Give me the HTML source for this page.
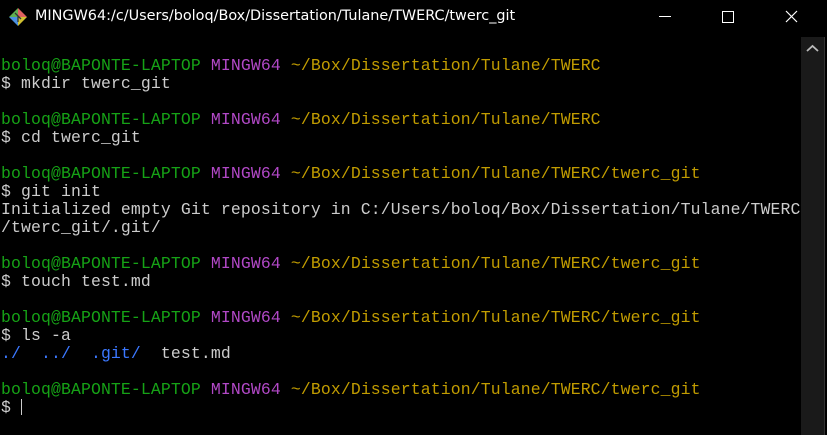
<!DOCTYPE html>
<html><head><style>
body{margin:0;width:827px;height:435px;background:#000;overflow:hidden;position:relative;font-family:"Liberation Sans",sans-serif}
.title{position:absolute;left:35px;top:8px;color:#fff;font-size:14.4px;font-family:"DejaVu Sans","Liberation Sans",sans-serif}
.term{position:absolute;left:1px;top:57px;font-family:"Liberation Mono",monospace;font-size:16.45px;letter-spacing:0.13px;line-height:18px;color:#cccccc;white-space:pre}
.g{color:#16a216}.m{color:#b148c6}.y{color:#c19c00}.b{color:#3b78ff}
.sb{position:absolute;left:801px;top:37px;width:23px;height:398px;background:#1a1a1a;border-right:1px solid #333}
</style></head><body>
<svg style="position:absolute;left:8px;top:7px" width="20" height="20" viewBox="0 0 20 20">
<polygon points="10,1 19,10 10,10" fill="#e06060"/>
<polygon points="1,10 10,10 10,19" fill="#4a90e0"/>
<polygon points="10,10 19,10 10,19" fill="#d0c030"/>
<polygon points="10,1 1,10 10,10" fill="#60b050"/>
<path d="M7 6 L13 12 M10 9 L10 15" stroke="#333" stroke-width="1.3"/>
</svg>
<div class="title">MINGW64:/c/Users/boloq/Box/Dissertation/Tulane/TWERC/twerc_git</div>
<div style="position:absolute;left:659px;top:16px;width:12px;height:1px;background:#fff"></div>
<div style="position:absolute;left:722px;top:11px;width:10px;height:10px;border:1px solid #fff"></div>
<svg style="position:absolute;left:785px;top:10px" width="13" height="13"><path d="M1 1L12 12M12 1L1 12" stroke="#fff" stroke-width="1.2"/></svg>
<div class="sb"><svg width="23" height="23"><path d="M6 14L11.5 9L17 14" stroke="#bbb" stroke-width="1.8" fill="none"/></svg></div>
<div class="term"><span class="g">boloq@BAPONTE-LAPTOP</span> <span class="m">MINGW64</span> <span class="y">~/Box/Dissertation/Tulane/TWERC</span>
$ mkdir twerc_git

<span class="g">boloq@BAPONTE-LAPTOP</span> <span class="m">MINGW64</span> <span class="y">~/Box/Dissertation/Tulane/TWERC</span>
$ cd twerc_git

<span class="g">boloq@BAPONTE-LAPTOP</span> <span class="m">MINGW64</span> <span class="y">~/Box/Dissertation/Tulane/TWERC/twerc_git</span>
$ git init
Initialized empty Git repository in C:/Users/boloq/Box/Dissertation/Tulane/TWERC
/twerc_git/.git/

<span class="g">boloq@BAPONTE-LAPTOP</span> <span class="m">MINGW64</span> <span class="y">~/Box/Dissertation/Tulane/TWERC/twerc_git</span>
$ touch test.md

<span class="g">boloq@BAPONTE-LAPTOP</span> <span class="m">MINGW64</span> <span class="y">~/Box/Dissertation/Tulane/TWERC/twerc_git</span>
$ ls -a
<span class="b">./  ../  .git/</span>  test.md

<span class="g">boloq@BAPONTE-LAPTOP</span> <span class="m">MINGW64</span> <span class="y">~/Box/Dissertation/Tulane/TWERC/twerc_git</span>
$ <span style="display:inline-block;width:1px;height:16px;background:#ccc;vertical-align:-3px"></span></div>
</body></html>
